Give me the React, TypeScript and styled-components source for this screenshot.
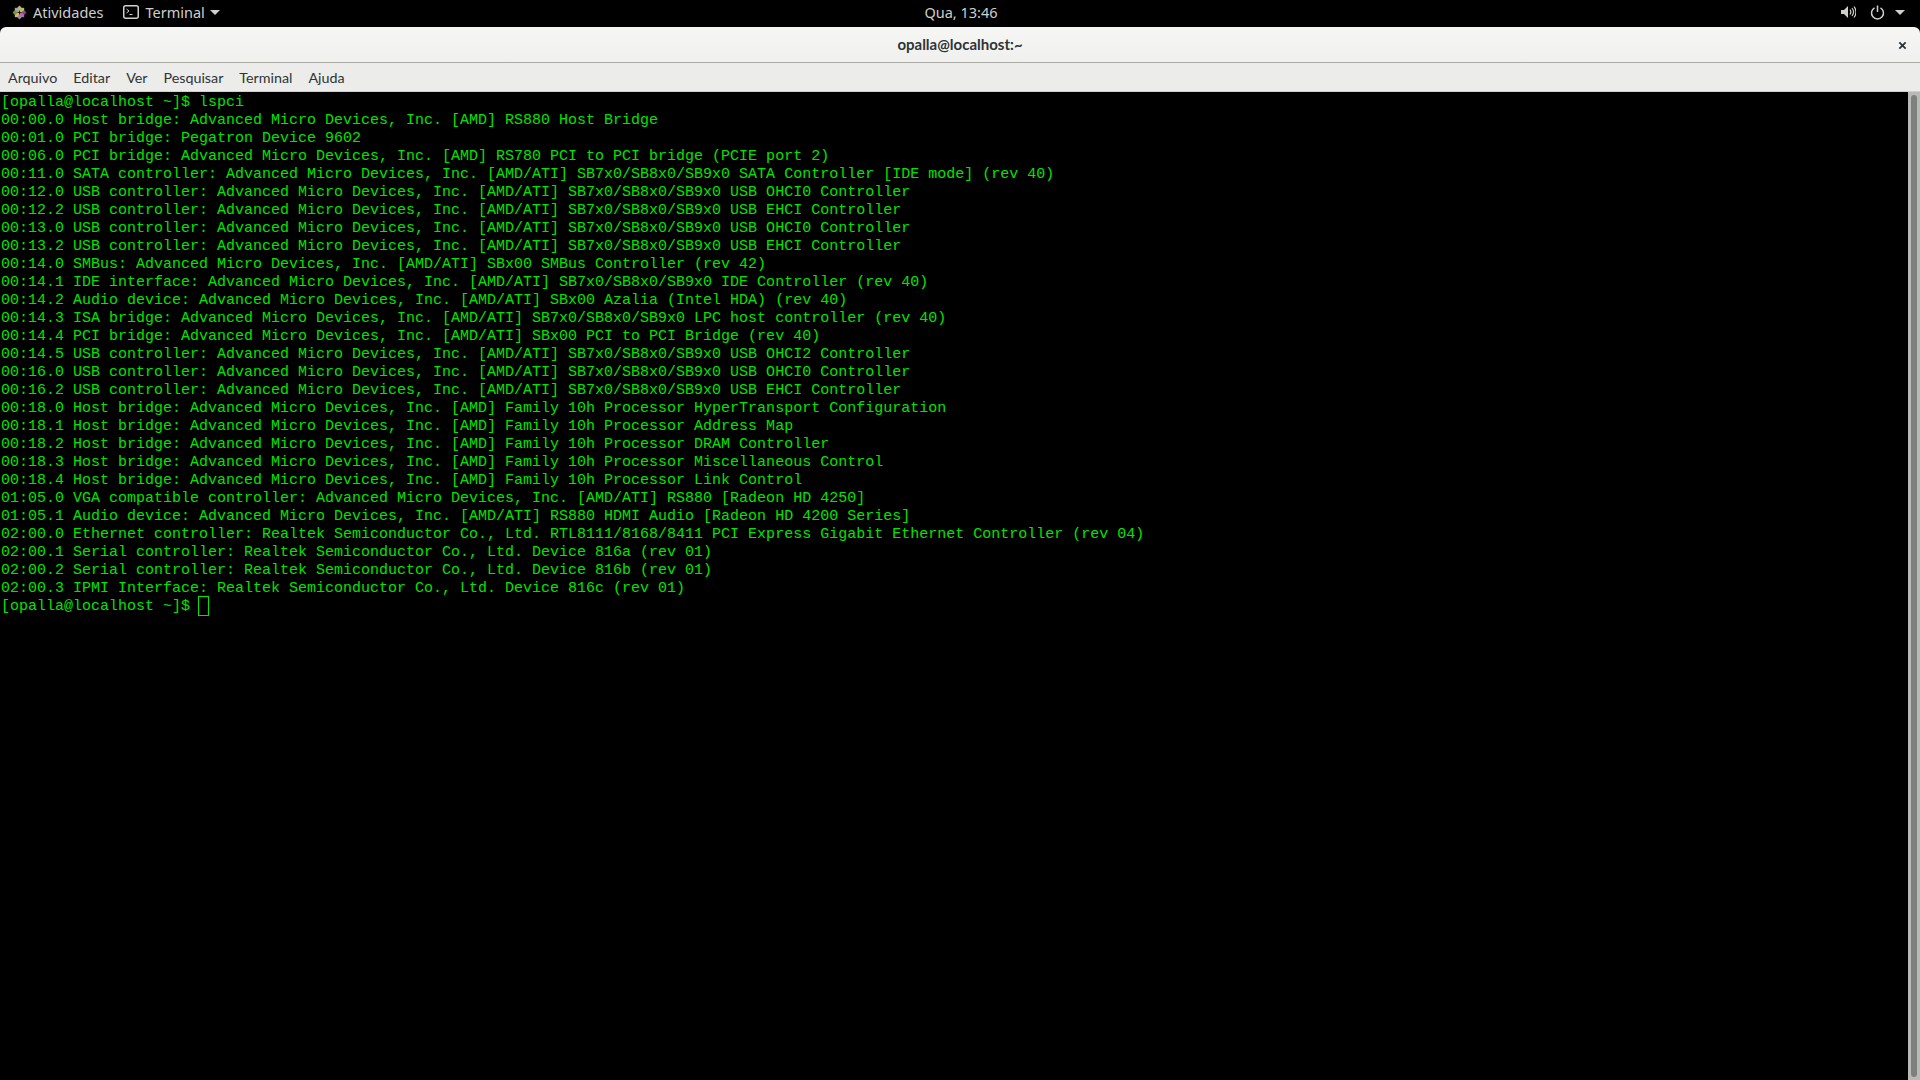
import React from "react";
import styled, { createGlobalStyle } from "styled-components";

const GlobalStyle = createGlobalStyle`
  html, body {
    margin: 0;
    padding: 0;
    background: #000;
    overflow: hidden;
  }
`;

// STYLES
const Screen = styled.div`
  width: 1920px;
  height: 1080px;
  display: flex;
  flex-direction: column;
  background: #000;
`;

const TopBar = styled.header`
  height: 27px;
  flex: none;
  display: grid;
  grid-template-columns: 1fr auto 1fr;
  align-items: center;
  padding: 0 15px 3px 12px;
  box-sizing: border-box;
  background: #000;
  color: #cfcfcc;
  font: 400 14.5px "Noto Sans", sans-serif;
`;

const BarGroup = styled.div<{ $end?: boolean }>`
  display: flex;
  align-items: center;
  justify-content: ${(p) => (p.$end ? "flex-end" : "flex-start")};
`;

const ActivitiesLabel = styled.span`
  margin-left: 6px;
  margin-right: 20px;
`;

const AppLabel = styled.span`
  margin-left: 6px;
  margin-right: 5px;
`;

const Clock = styled.span`
  padding-left: 5px;
`;

const Caret = styled.span`
  width: 0;
  height: 0;
  border-left: 5px solid transparent;
  border-right: 5px solid transparent;
  border-top: 5px solid #cfcfcc;
`;

const StatusIcon = styled.svg<{ $gap: number }>`
  display: block;
  margin-right: ${(p) => p.$gap}px;
`;

const TitleBar = styled.div`
  height: 36px;
  flex: none;
  position: relative;
  display: flex;
  align-items: center;
  justify-content: center;
  box-sizing: border-box;
  padding-bottom: 2px;
  background: linear-gradient(#f6f6f5, #f0f0ef);
  border-radius: 6px 6px 0 0;
  border-bottom: 1px solid #a9aaa4;
  color: #2e3436;
  font: 700 15px Lato, sans-serif;
`;

const CloseButton = styled.svg`
  position: absolute;
  right: 13px;
  top: 14px;
`;

const MenuBar = styled.nav`
  height: 29px;
  flex: none;
  box-sizing: border-box;
  display: flex;
  align-items: center;
  gap: 16px;
  padding: 0 8px;
  background: #ececea;
  border-bottom: 1px solid #cfcfcb;
  color: #2e3436;
  font: 400 14.3px Lato, sans-serif;
`;

const TerminalArea = styled.main`
  flex: 1;
  min-height: 0;
  display: flex;
`;

const Output = styled.pre`
  flex: 1;
  margin: 0;
  padding: 2px 0 0 1px;
  color: #00e400;
  font: 15px/18px "Liberation Mono", monospace;
`;

const Cursor = styled.span`
  display: inline-block;
  width: 11px;
  height: 20px;
  box-sizing: border-box;
  margin: -2px 0 0 -1px;
  vertical-align: top;
  border: 1px solid #00e400;
`;

const ScrollTrack = styled.div`
  width: 12px;
  flex: none;
  padding: 3px 3px;
  box-sizing: border-box;
  background: #b9bab8;
`;

const ScrollThumb = styled.div`
  height: 100%;
  border-radius: 3px;
  background: #7e807e;
`;

const lines = [
  "00:00.0 Host bridge: Advanced Micro Devices, Inc. [AMD] RS880 Host Bridge",
  "00:01.0 PCI bridge: Pegatron Device 9602",
  "00:06.0 PCI bridge: Advanced Micro Devices, Inc. [AMD] RS780 PCI to PCI bridge (PCIE port 2)",
  "00:11.0 SATA controller: Advanced Micro Devices, Inc. [AMD/ATI] SB7x0/SB8x0/SB9x0 SATA Controller [IDE mode] (rev 40)",
  "00:12.0 USB controller: Advanced Micro Devices, Inc. [AMD/ATI] SB7x0/SB8x0/SB9x0 USB OHCI0 Controller",
  "00:12.2 USB controller: Advanced Micro Devices, Inc. [AMD/ATI] SB7x0/SB8x0/SB9x0 USB EHCI Controller",
  "00:13.0 USB controller: Advanced Micro Devices, Inc. [AMD/ATI] SB7x0/SB8x0/SB9x0 USB OHCI0 Controller",
  "00:13.2 USB controller: Advanced Micro Devices, Inc. [AMD/ATI] SB7x0/SB8x0/SB9x0 USB EHCI Controller",
  "00:14.0 SMBus: Advanced Micro Devices, Inc. [AMD/ATI] SBx00 SMBus Controller (rev 42)",
  "00:14.1 IDE interface: Advanced Micro Devices, Inc. [AMD/ATI] SB7x0/SB8x0/SB9x0 IDE Controller (rev 40)",
  "00:14.2 Audio device: Advanced Micro Devices, Inc. [AMD/ATI] SBx00 Azalia (Intel HDA) (rev 40)",
  "00:14.3 ISA bridge: Advanced Micro Devices, Inc. [AMD/ATI] SB7x0/SB8x0/SB9x0 LPC host controller (rev 40)",
  "00:14.4 PCI bridge: Advanced Micro Devices, Inc. [AMD/ATI] SBx00 PCI to PCI Bridge (rev 40)",
  "00:14.5 USB controller: Advanced Micro Devices, Inc. [AMD/ATI] SB7x0/SB8x0/SB9x0 USB OHCI2 Controller",
  "00:16.0 USB controller: Advanced Micro Devices, Inc. [AMD/ATI] SB7x0/SB8x0/SB9x0 USB OHCI0 Controller",
  "00:16.2 USB controller: Advanced Micro Devices, Inc. [AMD/ATI] SB7x0/SB8x0/SB9x0 USB EHCI Controller",
  "00:18.0 Host bridge: Advanced Micro Devices, Inc. [AMD] Family 10h Processor HyperTransport Configuration",
  "00:18.1 Host bridge: Advanced Micro Devices, Inc. [AMD] Family 10h Processor Address Map",
  "00:18.2 Host bridge: Advanced Micro Devices, Inc. [AMD] Family 10h Processor DRAM Controller",
  "00:18.3 Host bridge: Advanced Micro Devices, Inc. [AMD] Family 10h Processor Miscellaneous Control",
  "00:18.4 Host bridge: Advanced Micro Devices, Inc. [AMD] Family 10h Processor Link Control",
  "01:05.0 VGA compatible controller: Advanced Micro Devices, Inc. [AMD/ATI] RS880 [Radeon HD 4250]",
  "01:05.1 Audio device: Advanced Micro Devices, Inc. [AMD/ATI] RS880 HDMI Audio [Radeon HD 4200 Series]",
  "02:00.0 Ethernet controller: Realtek Semiconductor Co., Ltd. RTL8111/8168/8411 PCI Express Gigabit Ethernet Controller (rev 04)",
  "02:00.1 Serial controller: Realtek Semiconductor Co., Ltd. Device 816a (rev 01)",
  "02:00.2 Serial controller: Realtek Semiconductor Co., Ltd. Device 816b (rev 01)",
  "02:00.3 IPMI Interface: Realtek Semiconductor Co., Ltd. Device 816c (rev 01)",
];

const menus = ["Arquivo", "Editar", "Ver", "Pesquisar", "Terminal", "Ajuda"];

const CentosLogo: React.FC = () => (
  <svg width="15" height="15" viewBox="0 0 16 16">
    <rect x="3" y="3" width="4.6" height="4.6" fill="#9aa0c8" />
    <rect x="8.4" y="3" width="4.6" height="4.6" fill="#a8c46a" />
    <rect x="8.4" y="8.4" width="4.6" height="4.6" fill="#b56aa8" />
    <rect x="3" y="8.4" width="4.6" height="4.6" fill="#e2b45a" />
    <polygon points="8,0.5 10.3,3 8,6.5 5.7,3" fill="#c9b35a" />
    <polygon points="15.5,8 13,10.3 9.5,8 13,5.7" fill="#9c3f8a" />
    <polygon points="8,15.5 5.7,13 8,9.5 10.3,13" fill="#8d8db5" />
    <polygon points="0.5,8 3,5.7 6.5,8 3,10.3" fill="#6f9a2d" />
  </svg>
);

const TerminalIcon: React.FC = () => (
  <svg width="16" height="14" viewBox="0 0 16 14" fill="none" stroke="#cfcfcc">
    <rect x="0.75" y="0.75" width="14.5" height="12.5" rx="2" strokeWidth="1.5" />
    <path d="M3.5 4l2.5 2-2.5 2M6.5 9.5h3" strokeWidth="1" />
  </svg>
);

const App: React.FC = () => {
  return (
    <Screen>
      <GlobalStyle />
      <TopBar>
        <BarGroup>
          <CentosLogo />
          <ActivitiesLabel>Atividades</ActivitiesLabel>
          <TerminalIcon />
          <AppLabel>Terminal</AppLabel>
          <Caret />
        </BarGroup>
        <Clock>Qua, 13:46</Clock>
        <BarGroup $end>
          <StatusIcon $gap={14} width="16" height="14" viewBox="0 0 16 14" fill="none" stroke="#cfcfcc">
            <path d="M1 5h3l4-4v12l-4-4H1z" fill="#cfcfcc" stroke="none" />
            <path d="M10 4.5c1 1.5 1 3.5 0 5M12 3c1.8 2.3 1.8 5.7 0 8M14 1.5c2.4 3.3 2.4 7.7 0 11" strokeWidth="1.2" />
          </StatusIcon>
          <StatusIcon $gap={10} width="15" height="15" viewBox="0 0 15 15" fill="none" stroke="#cfcfcc" strokeWidth="1.5">
            <path d="M4.5 2.8a6 6 0 1 0 6 0M7.5 0.5v6.5" />
          </StatusIcon>
          <Caret />
        </BarGroup>
      </TopBar>
      <TitleBar>
        opalla@localhost:~
        <CloseButton width="9" height="9" viewBox="0 0 10 10" fill="none" stroke="#2e3436" strokeWidth="2">
          <path d="M1.5 1.5l7 7M8.5 1.5l-7 7" />
        </CloseButton>
      </TitleBar>
      <MenuBar>
        {menus.map((m) => (
          <span key={m}>{m}</span>
        ))}
      </MenuBar>
      <TerminalArea>
        <Output>
          {"[opalla@localhost ~]$ lspci\n"}
          {lines.join("\n")}
          {"\n[opalla@localhost ~]$ "}
          <Cursor />
        </Output>
        <ScrollTrack>
          <ScrollThumb />
        </ScrollTrack>
      </TerminalArea>
    </Screen>
  );
};

export default App;
